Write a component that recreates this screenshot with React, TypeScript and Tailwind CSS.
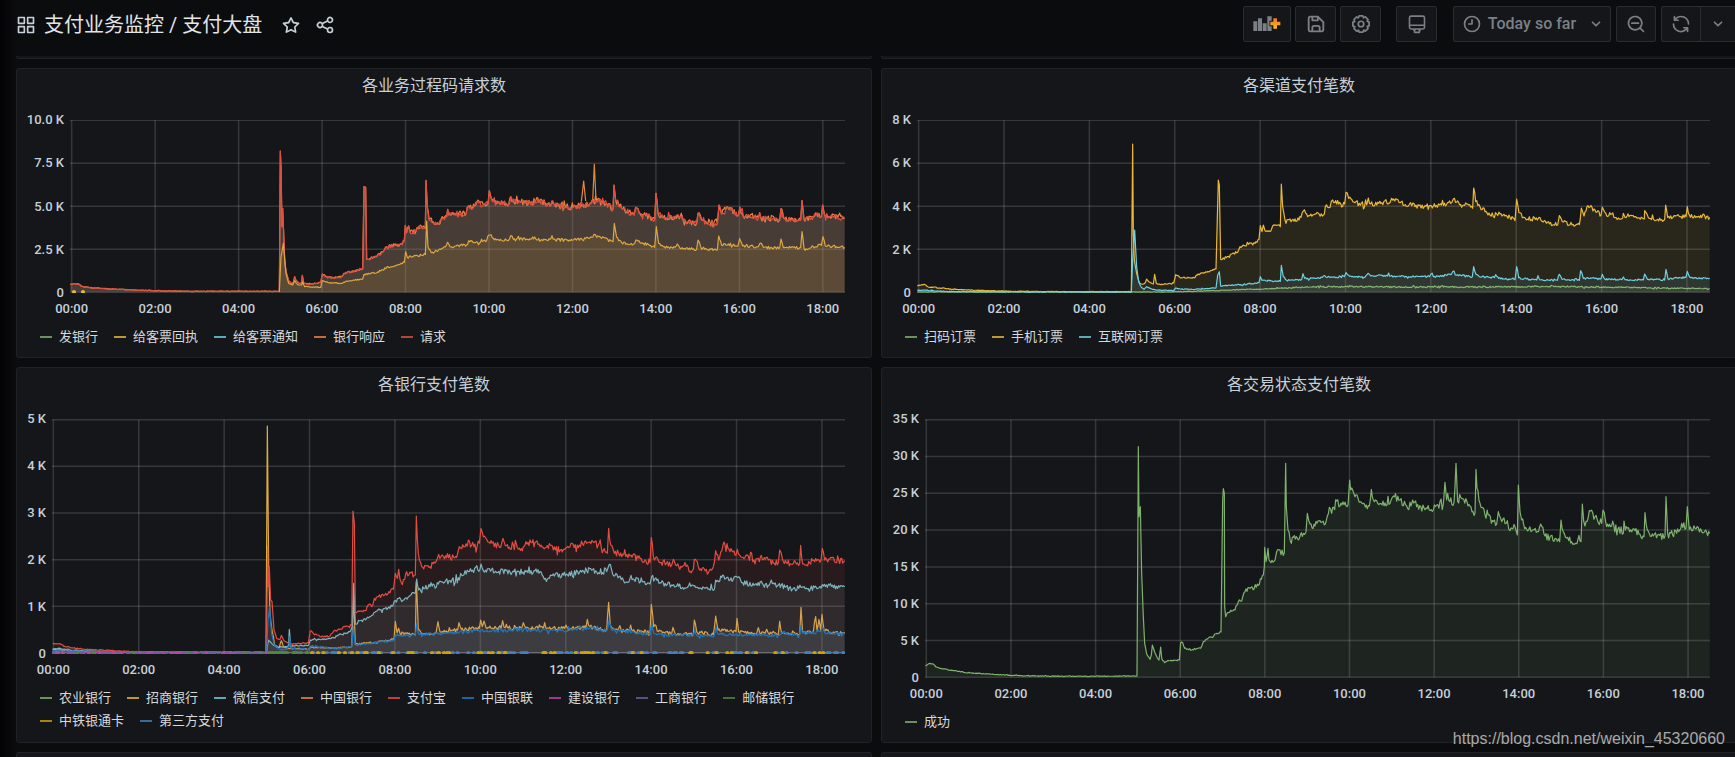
import React, { FunctionComponent, ReactNode } from 'react'

type Point = [number, number]

interface Series {
    color: string
    trace: string
    noise?: number
    fill?: string
    fillOpacity?: number
}

interface LegendEntry {
    name: string
    color: string
}

interface Box {
    x: number
    y: number
    width: number
    height: number
    className: string
}

interface PanelProps {
    title: string
    box: Box
    base: number
    top: number
    origin: number
    step: number
    axisWidth: string
    yLabels: string[]
    series: Series[]
    legend: LegendEntry[]
    children?: ReactNode
}

const HOURS = ['00:00', '02:00', '04:00', '06:00', '08:00', '10:00', '12:00', '14:00', '16:00', '18:00']

const GREEN = '#7eb26d'
const YELLOW = '#eab839'
const CYAN = '#6ed0e0'
const ORANGE = '#ef843c'
const RED = '#e24d42'
const BLUE = '#1f78c1'

// traces are "x,y" pairs, three units to a screen pixel
const REQUESTS = `211,553 225,551 235,551 245,559 270,563 300,565 330,567 400,570 460,572 560,574 838,574 841,153 843,200 846,380 848,325 851,400 854,480 858,515 866,543 874,550 880,548 884,530 890,543 898,550 905,548 907,526 911,550 925,553 962,548 967,522 980,530 1000,534 1025,530 1032,520 1060,514 1088,507 1092,260 1097,262 1100,478 1105,478 1130,470 1150,455 1160,440 1200,433 1213,420 1216,376 1220,398 1226,378 1230,396 1248,394 1254,382 1276,384 1278,241 1282,320 1288,360 1300,365 1310,372 1330,355 1340,350 1343,328 1346,345 1365,340 1398,342 1405,318 1415,328 1430,308 1450,314 1464,312 1468,272 1474,295 1495,305 1526,314 1532,290 1538,305 1590,308 1620,300 1650,318 1656,303 1665,317 1720,322 1770,310 1790,303 1820,312 1839,328 1842,255 1847,300 1865,325 1902,345 1907,322 1918,340 1950,350 1964,360 1968,280 1974,340 1990,352 2025,352 2032,345 2050,362 2090,370 2094,340 2105,360 2120,370 2152,372 2157,315 2165,342 2180,320 2215,345 2220,322 2230,350 2245,345 2275,355 2279,338 2283,355 2330,355 2339,360 2343,326 2352,355 2380,362 2402,360 2406,302 2412,358 2440,352 2450,340 2464,350 2468,315 2474,345 2534,356`

const RECEIPTS = `838,576 843,470 850,430 858,520 866,550 878,555 884,542 895,555 905,555 908,545 914,560 962,562 967,542 985,548 1025,550 1040,543 1088,537 1092,523 1130,518 1160,502 1200,493 1213,487 1217,455 1222,472 1276,464 1280,363 1284,440 1294,458 1310,453 1338,438 1343,427 1350,440 1400,435 1406,422 1420,428 1460,422 1467,405 1480,415 1525,422 1532,407 1540,418 1580,418 1598,411 1610,420 1650,418 1656,407 1666,420 1720,420 1775,412 1782,403 1790,412 1820,415 1839,425 1843,370 1850,412 1865,428 1900,433 1908,420 1930,430 1964,442 1969,380 1976,430 1990,440 2025,442 2032,432 2040,445 2090,448 2094,420 2102,440 2120,448 2152,450 2156,408 2165,436 2185,432 2214,438 2219,416 2228,438 2275,440 2280,430 2290,442 2339,444 2343,417 2350,443 2402,443 2406,395 2412,445 2464,436 2469,410 2476,438 2534,442`

const MOBILE = `142,556 155,554 165,554 175,561 210,564 260,568 330,571 430,574 600,575 784,575 788,132 790,400 793,480 800,520 808,548 818,553 826,548 830,537 838,546 850,552 854,523 859,550 872,554 911,549 917,524 930,533 975,533 985,522 1020,513 1038,507 1045,240 1048,255 1052,478 1060,474 1078,472 1088,460 1103,457 1110,440 1135,433 1155,430 1167,418 1171,377 1176,395 1180,375 1185,392 1203,392 1208,378 1231,380 1234,252 1238,320 1245,360 1272,364 1293,352 1300,333 1310,342 1360,345 1366,320 1380,322 1388,300 1400,312 1424,312 1428,277 1436,295 1455,308 1490,315 1495,294 1502,312 1560,308 1565,295 1590,308 1615,318 1622,308 1635,320 1690,318 1745,308 1750,297 1760,306 1790,312 1808,325 1811,264 1817,305 1830,320 1860,345 1880,342 1890,342 1920,352 1935,362 1940,297 1947,338 1960,352 2002,360 2007,352 2020,366 2063,375 2068,347 2080,366 2100,374 2128,374 2134,324 2142,348 2154,317 2175,330 2193,345 2197,322 2210,347 2225,342 2245,354 2258,354 2260,340 2265,352 2295,350 2323,357 2324,332 2335,353 2360,360 2384,358 2387,315 2393,352 2430,350 2448,350 2452,320 2458,345 2480,350 2519,352`

const INTERNET = `142,571 165,570 200,573 260,575 784,576 788,480 794,390 800,500 806,545 815,563 822,568 830,560 845,567 860,570 911,572 917,564 930,567 975,568 1038,564 1043,525 1048,515 1052,558 1090,556 1167,548 1171,530 1176,541 1231,544 1234,496 1240,530 1250,541 1295,538 1299,521 1304,535 1350,535 1364,527 1372,532 1423,530 1428,518 1436,526 1485,532 1494,520 1502,528 1552,528 1556,519 1562,528 1610,530 1678,530 1683,522 1690,530 1743,524 1748,515 1756,525 1807,530 1811,500 1818,523 1835,531 1873,533 1877,524 1886,535 1935,539 1940,500 1946,533 1970,537 2000,540 2004,527 2010,540 2062,541 2068,523 2076,538 2128,541 2132,512 2140,535 2193,536 2197,523 2204,537 2256,539 2260,531 2265,539 2320,540 2324,522 2332,538 2384,540 2388,508 2394,537 2430,533 2448,532 2452,514 2460,532 2490,536 2519,535`

const SCAN = '142,576 900,576 1000,573 1200,566 1320,561 1430,560 1700,561 2110,560 2300,563 2519,566'

const ALIPAY = `158,731 178,731 195,739 220,744 260,748 340,752 430,756 799,756 803,437 805,560 808,500 812,600 816,604 822,690 830,715 840,718 844,706 852,722 872,732 925,728 931,693 940,700 960,710 990,708 1000,695 1035,680 1055,678 1059,333 1063,370 1066,635 1098,632 1105,615 1118,617 1123,595 1160,585 1180,568 1186,520 1192,535 1196,508 1200,538 1214,538 1220,515 1246,525 1249,348 1255,460 1265,500 1290,500 1308,485 1316,463 1330,470 1370,472 1378,440 1395,440 1405,420 1415,435 1438,430 1443,385 1450,410 1470,430 1502,442 1509,415 1516,437 1570,440 1578,425 1608,425 1620,440 1645,445 1690,448 1710,440 1760,430 1782,428 1810,450 1822,460 1826,385 1832,435 1840,450 1865,470 1890,468 1920,475 1950,488 1954,413 1960,470 1980,488 2015,495 2020,478 2030,497 2080,508 2083,478 2095,500 2125,518 2140,500 2147,452 2156,480 2169,435 2190,455 2208,465 2212,448 2222,470 2245,468 2265,492 2275,475 2335,488 2339,450 2350,485 2380,490 2399,490 2402,436 2408,492 2450,482 2463,480 2467,445 2474,480 2534,482`

const WECHAT = `158,746 175,745 210,750 300,754 430,757 800,758 803,735 806,720 815,730 830,742 860,740 866,735 868,688 872,738 925,736 931,720 990,716 1050,695 1057,680 1061,550 1066,672 1100,655 1140,630 1170,625 1186,602 1215,595 1246,580 1250,537 1256,570 1290,560 1315,552 1350,542 1378,540 1382,520 1405,515 1440,508 1443,492 1450,512 1530,516 1620,515 1630,530 1690,525 1760,512 1820,515 1828,493 1838,522 1870,540 1887,545 1890,535 1930,545 1950,552 1955,530 1980,548 2030,558 2090,562 2143,568 2147,540 2156,545 2168,525 2190,540 2212,532 2225,548 2290,555 2335,555 2380,565 2403,562 2450,565 2470,558 2534,560`

const MERCHANTS = `158,748 210,753 430,757 798,758 802,78 806,500 810,640 816,690 824,735 838,742 844,722 850,740 866,745 925,748 932,742 1000,745 1055,740 1061,590 1066,733 1120,728 1182,718 1186,664 1191,698 1196,685 1200,700 1246,705 1249,545 1255,690 1265,700 1308,700 1314,665 1320,695 1373,690 1377,668 1384,688 1438,685 1442,660 1447,680 1452,663 1458,683 1503,685 1508,662 1516,683 1565,685 1570,668 1578,683 1630,685 1634,668 1640,685 1694,685 1698,675 1704,686 1758,682 1762,658 1770,680 1820,690 1826,607 1831,675 1850,687 1888,692 1892,675 1898,692 1950,700 1954,613 1961,680 1975,695 2015,700 2019,682 2025,700 2080,703 2083,660 2090,695 2140,704 2147,648 2154,690 2208,695 2211,655 2216,695 2270,700 2275,683 2280,700 2295,700 2300,688 2305,700 2335,703 2339,664 2345,700 2399,704 2403,622 2408,698 2440,695 2447,650 2451,690 2457,658 2462,690 2466,643 2472,690 2490,697 2534,697`

const UNIONPAY = `158,752 430,757 800,758 804,660 809,620 815,700 824,738 840,748 860,748 868,740 869,710 874,745 925,748 932,738 1000,745 1055,740 1060,680 1066,735 1182,720 1186,705 1215,708 1246,705 1250,670 1256,702 1320,702 1380,695 1443,692 1570,690 1690,692 1770,684 1820,692 1827,662 1835,688 1950,703 1955,670 1962,700 2010,705 2080,706 2084,690 2090,706 2142,708 2148,680 2154,702 2250,705 2335,706 2350,698 2398,705 2403,678 2408,700 2462,695 2466,682 2474,698 2534,700`

const SUCCESS = `166,797 180,790 190,792 198,801 215,806 250,812 300,819 370,823 420,826 500,828 650,829 801,828 805,140 807,350 811,320 815,520 820,650 824,730 830,762 840,778 844,765 847,735 852,750 858,765 867,780 872,741 875,775 884,788 900,782 928,780 932,728 938,728 944,745 965,750 992,745 1000,725 1008,718 1025,712 1040,700 1053,696 1058,300 1060,266 1063,280 1064,620 1067,650 1072,638 1095,630 1105,605 1115,603 1125,575 1140,565 1165,556 1180,525 1183,500 1184,442 1188,485 1194,445 1197,480 1215,480 1220,455 1243,458 1247,190 1249,320 1254,390 1264,430 1270,412 1285,420 1300,400 1308,395 1312,340 1320,372 1335,378 1350,362 1366,372 1378,322 1385,340 1400,303 1410,318 1434,315 1439,240 1442,270 1455,290 1480,310 1498,318 1504,268 1510,300 1530,310 1560,310 1570,288 1590,300 1610,318 1623,318 1628,300 1640,320 1690,330 1700,315 1720,312 1725,247 1730,300 1752,308 1758,190 1763,305 1775,295 1800,318 1815,340 1818,208 1821,265 1830,310 1845,345 1880,372 1885,335 1895,365 1912,362 1920,392 1935,380 1942,405 1945,255 1950,335 1955,360 1970,388 2002,395 2012,372 2025,408 2055,415 2069,425 2073,360 2080,395 2093,412 2105,425 2133,425 2137,312 2145,378 2158,332 2175,350 2195,370 2199,330 2210,380 2225,378 2250,400 2260,400 2262,363 2266,390 2295,392 2322,410 2325,338 2332,390 2350,408 2385,408 2388,290 2393,400 2420,400 2435,370 2448,385 2452,320 2458,388 2475,385 2495,395 2519,400`

const random = (seed: number) => () => {
    seed = (seed * 16807) % 2147483647
    return seed / 2147483647
}

// keeps the given points and fills the gaps between them with jitter that grows with the value
const densify = (trace: string, base: number, noise: number, seed: number): Point[] => {
    const rand = random(seed)
    const points = trace.trim().split(/\s+/).map((pair) => pair.split(',').map(Number) as Point)
    const out: Point[] = [points[0]]
    for (let i = 1; i < points.length; i++) {
        const [x0, y0] = points[i - 1]
        const [x1, y1] = points[i]
        const count = Math.floor((x1 - x0) / 3)
        for (let k = 1; k < count; k++) {
            const y = y0 + ((y1 - y0) * k) / count
            const amp = noise * (base - y) + 0.8
            const kick = rand() > 0.9 ? 2 : 1
            out.push([x0 + ((x1 - x0) * k) / count, y + (rand() * 2 - 1) * amp * kick])
        }
        out.push([x1, y1])
    }
    return out
}

const toPath = (points: Point[]) => 'M' + points.map(([x, y]) => `${x.toFixed(1)} ${y.toFixed(1)}`).join('L')

const Panel: FunctionComponent<PanelProps> = ({
    title,
    box,
    base,
    top,
    origin,
    step,
    axisWidth,
    yLabels,
    series,
    legend,
    children
}) => {
    const right = box.x + box.width
    return (
        <section className="flex flex-col rounded-[3px] border border-[#202226] bg-[#141619] pb-[9px]">
            <h2 className="pt-[5px] pr-5 text-center text-base leading-6 text-[#c7d0d9]">{title}</h2>
            <div className="mt-[22px] grid grid-cols-[auto_1fr] gap-x-1.5 gap-y-2 pr-[26px] text-[13px] font-medium leading-4">
                <ol className={`-my-2 flex flex-col justify-between text-right ${axisWidth}`}>
                    {yLabels.map((label) => <li key={label}>{label}</li>)}
                </ol>
                <svg
                    className={`block w-full ${box.className}`}
                    viewBox={`${box.x} ${box.y} ${box.width} ${box.height}`}
                    preserveAspectRatio="none"
                    role="img"
                    aria-label={title}
                >
                    <g stroke="#c8c8c8" strokeOpacity="0.19" strokeWidth="4.5">
                        {yLabels.map((label, i) => {
                            const y = top + ((base - top) * i) / (yLabels.length - 1)
                            return <path key={label} d={`M${box.x} ${y}H${right}`} />
                        })}
                        {HOURS.map((hour, i) => <path key={hour} d={`M${origin + step * i} ${top}V${base}`} />)}
                    </g>
                    {series.map(({ color, trace, noise = 0.02, fill = color, fillOpacity = 0.1 }, i) => {
                        const points = densify(trace, base, noise, 97 + i * 131)
                        const line = toPath(points)
                        const first = points[0][0]
                        const last = points[points.length - 1][0]
                        return (
                            <g key={i}>
                                <path d={`${line}L${last} ${base}L${first} ${base}Z`} fill={fill} fillOpacity={fillOpacity} />
                                <path d={line} fill="none" stroke={color} strokeWidth="1.2" strokeLinejoin="round" vectorEffect="non-scaling-stroke" />
                            </g>
                        )
                    })}
                    {children}
                </svg>
                <ol className="col-start-2 flex" style={{ paddingLeft: `${((origin - box.x) / box.width) * 100}%` }}>
                    {HOURS.map((hour) => (
                        <li key={hour} className="shrink-0 last:w-0" style={{ width: hour === '18:00' ? 0 : `${(step / (right - origin)) * 100}%` }}>
                            <span className="inline-block -translate-x-1/2">{hour}</span>
                        </li>
                    ))}
                </ol>
            </div>
            <ul className="mt-2 flex flex-wrap gap-x-4 pl-[23px] text-[13px] leading-[23px] text-[#d8d9da]">
                {legend.map(({ name, color }) => (
                    <li key={name} className="flex items-center gap-[7px]">
                        <span className="h-0.5 w-3 opacity-80" style={{ backgroundColor: color }} />
                        {name}
                    </li>
                ))}
            </ul>
        </section>
    )
}

// isolated samples sit on the zero line as dots
const Dots: FunctionComponent<{ color: string, xs: number[], y: number }> = ({ color, xs, y }) => (
    <path
        d={xs.map((x) => `M${x} ${y}h0.01`).join('')}
        stroke={color}
        strokeWidth="4"
        strokeLinecap="round"
        vectorEffect="non-scaling-stroke"
    />
)

const scatter = (from: number, to: number, count: number, seed: number) => {
    const rand = random(seed)
    return Array.from({ length: count }, () => Math.round(from + rand() * (to - from)))
}

const Icon: FunctionComponent<{ d: string, className?: string }> = ({ d, className = 'size-5' }) => (
    <svg className={className} viewBox="0 0 24 24" fill="currentColor" aria-hidden="true">
        <path d={d} />
    </svg>
)

const ICONS = {
    apps: 'M10,13H3a1,1,0,0,0-1,1v7a1,1,0,0,0,1,1h7a1,1,0,0,0,1-1V14A1,1,0,0,0,10,13ZM9,20H4V15H9ZM21,2H14a1,1,0,0,0-1,1v7a1,1,0,0,0,1,1h7a1,1,0,0,0,1-1V3A1,1,0,0,0,21,2ZM20,9H15V4h5Zm1,4H14a1,1,0,0,0-1,1v7a1,1,0,0,0,1,1h7a1,1,0,0,0,1-1V14A1,1,0,0,0,21,13Zm-1,7H15V15h5ZM10,2H3A1,1,0,0,0,2,3v7a1,1,0,0,0,1,1h7a1,1,0,0,0,1-1V3A1,1,0,0,0,10,2ZM9,9H4V4H9Z',
    star: 'M22,9.67A1,1,0,0,0,21.14,9l-5.69-.83L12.9,3a1,1,0,0,0-1.8,0L8.55,8.16,2.86,9a1,1,0,0,0-.81.68,1,1,0,0,0,.25,1l4.13,4-1,5.68A1,1,0,0,0,6.9,21.44L12,18.77l5.1,2.67a.93.93,0,0,0,.46.12,1,1,0,0,0,.59-.19,1,1,0,0,0,.4-1l-1-5.68,4.13-4A1,1,0,0,0,22,9.67Zm-6.15,4a1,1,0,0,0-.29.88l.72,4.2-3.76-2a1.06,1.06,0,0,0-.94,0l-3.76,2,.72-4.2a1,1,0,0,0-.29-.88l-3-3,4.21-.61a1,1,0,0,0,.76-.55L12,5.7l1.88,3.82a1,1,0,0,0,.76.55l4.21.61Z',
    share: 'M18,14a4,4,0,0,0-3.08,1.48l-5.1-2.35a3.64,3.64,0,0,0,0-2.26l5.1-2.35A4,4,0,1,0,14,6a4.17,4.17,0,0,0,.07.71L8.79,9.14a4,4,0,1,0,0,5.72l5.28,2.43A4.17,4.17,0,0,0,14,18a4,4,0,1,0,4-4ZM18,4a2,2,0,1,1-2,2A2,2,0,0,1,18,4ZM6,14a2,2,0,1,1,2-2A2,2,0,0,1,6,14Zm12,6a2,2,0,1,1,2-2A2,2,0,0,1,18,20Z',
    save: 'M20.71,9.29l-6-6a1,1,0,0,0-.32-.21A1.09,1.09,0,0,0,14,3H6A3,3,0,0,0,3,6V18a3,3,0,0,0,3,3H18a3,3,0,0,0,3-3V10A1,1,0,0,0,20.71,9.29ZM9,5h4V7H9Zm6,14H9V16a1,1,0,0,1,1-1h4a1,1,0,0,1,1,1Zm4-1a1,1,0,0,1-1,1H17V16a3,3,0,0,0-3-3H10a3,3,0,0,0-3,3v3H6a1,1,0,0,1-1-1V6A1,1,0,0,1,6,5H7V8A1,1,0,0,0,8,9h6a1,1,0,0,0,1-1V6.41l4,4Z',
    sync: 'M19.91,15.51H15.38a1,1,0,0,0,0,2h2.4A8,8,0,0,1,4,12a1,1,0,1,0-2,0,10,10,0,0,0,16.88,7.23V21a1,1,0,0,0,2,0V16.5A1,1,0,0,0,19.91,15.51ZM12,2A10,10,0,0,0,5.12,4.77V3a1,1,0,0,0-2,0V7.5a1,1,0,0,0,1,1h4.5a1,1,0,0,0,0-2H6.22A8,8,0,0,1,20,12a1,1,0,0,0,2,0A10,10,0,0,0,12,2Z',
    clock: 'M12,2A10,10,0,1,0,22,12,10,10,0,0,0,12,2Zm0,18a8,8,0,1,1,8-8A8,8,0,0,1,12,20ZM12,6a1,1,0,0,0-1,1v4H8a1,1,0,0,0,0,2h4a1,1,0,0,0,1-1V7A1,1,0,0,0,12,6Z',
    angleDown: 'M17,9.17a1,1,0,0,0-1.41,0L12,12.71,8.46,9.17a1,1,0,0,0-1.41,0,1,1,0,0,0,0,1.42l4.24,4.24a1,1,0,0,0,1.42,0L17,10.59A1,1,0,0,0,17,9.17Z',
    zoomOut: 'M21.71,20.29,18,16.61A9,9,0,1,0,16.61,18l3.68,3.68a1,1,0,0,0,1.42,0A1,1,0,0,0,21.71,20.29ZM11,18a7,7,0,1,1,7-7A7,7,0,0,1,11,18Zm4-8H7a1,1,0,0,0,0,2h8a1,1,0,0,0,0-2Z'
}

const gear = 'M' + Array.from({ length: 8 }, (_, i) => [[-24, 7.3], [-13, 9.1], [13, 9.1], [21, 7.3]].map(([deg, r]) => {
    const a = ((i * 45 + deg) * Math.PI) / 180
    return `${(12 + r * Math.cos(a)).toFixed(2)} ${(12 + r * Math.sin(a)).toFixed(2)}`
}).join('L')).join('L') + 'Z'

const ToolButton: FunctionComponent<{ label: string, className: string, children: ReactNode }> = ({ label, className, children }) => (
    <button
        type="button"
        aria-label={label}
        className={`flex h-9 shrink-0 items-center justify-center border border-[#2a2c2f] bg-[#141619] text-[#7b8087] ${className}`}
    >
        {children}
    </button>
)

const Header: FunctionComponent = () => (
    <header className="-mr-px mb-2 flex h-12 items-center justify-between">
        <div className="flex items-center pt-0.5 text-[#c7d0d9]">
            <Icon d={ICONS.apps} />
            <h1 className="ml-2 text-xl leading-7 text-[#e3e4e6]">
                <a href="#folder">支付业务监控</a> / <a href="#dashboard">支付大盘</a>
            </h1>
            <button type="button" aria-label="收藏" className="ml-[19px]"><Icon d={ICONS.star} /></button>
            <button type="button" aria-label="分享" className="ml-3.5"><Icon d={ICONS.share} /></button>
        </div>
        <div className="flex items-center">
            <ToolButton label="Add panel" className="w-12 rounded-xs">
                <svg className="h-4 w-7" viewBox="56 51 84 48" aria-hidden="true">
                    <defs>
                        <linearGradient id="plus" x1="0" y1="0" x2="0" y2="1">
                            <stop offset="0" stopColor="#f0702a" />
                            <stop offset="1" stopColor="#fbc01a" />
                        </linearGradient>
                    </defs>
                    <path fill="currentColor" d="M57 67h12v29H57zM71 58h12v38H71zM85 73h12v23H85zM99 52h13v44H99z" />
                    <path fill="url(#plus)" stroke="#141619" strokeWidth="5" paintOrder="stroke" d="M117 58h11v10h10v11h-10v10h-11V79h-9V68h9z" />
                </svg>
            </ToolButton>
            <ToolButton label="Save dashboard" className="ml-1 w-[41px] rounded-xs">
                <Icon d={ICONS.save} className="size-[22px]" />
            </ToolButton>
            <ToolButton label="Dashboard settings" className="ml-1 w-[41px] rounded-xs">
                <svg className="size-[22px]" viewBox="0 0 24 24" fill="none" stroke="currentColor" strokeWidth="1.9" strokeLinejoin="round" aria-hidden="true">
                    <path d={gear} />
                    <circle cx="12" cy="12" r="3" />
                </svg>
            </ToolButton>
            <ToolButton label="Cycle view mode" className="ml-[15px] w-[41px] rounded-xs">
                <svg className="size-5" viewBox="0 0 24 24" fill="none" stroke="currentColor" strokeWidth="1.9" strokeLinejoin="round" aria-hidden="true">
                    <rect x="3" y="2.5" width="18" height="15.5" rx="2" />
                    <path d="M3 13.5h18M9.5 18v1.5h-2M14.5 18v1.5h2M9 19v3h6v-3" />
                </svg>
            </ToolButton>
            <ToolButton label="Time range" className="ml-4 w-[158px] rounded-xs pl-1">
                <Icon d={ICONS.clock} />
                <span className="ml-1.5 mr-2.5 text-base font-medium">Today so far</span>
                <Icon d={ICONS.angleDown} />
            </ToolButton>
            <ToolButton label="Zoom out" className="ml-[5px] w-10 rounded-xs">
                <Icon d={ICONS.zoomOut} />
            </ToolButton>
            <ToolButton label="Refresh" className="ml-[5px] w-10 rounded-l-xs">
                <Icon d={ICONS.sync} />
            </ToolButton>
            <ToolButton label="Refresh interval" className="-ml-px w-9 rounded-r-xs">
                <Icon d={ICONS.angleDown} />
            </ToolButton>
        </div>
    </header>
)

export default function App() {
    return (
        <div className="relative flex min-h-screen flex-col overflow-hidden bg-[linear-gradient(to_right,#030304,#0b0c0e_16px)] pl-4 font-[Roboto,'Noto_Sans_CJK_SC',sans-serif] text-[#c7d0d9]">
            <Header />
            <main className="-mr-0.5 grid flex-1 grid-cols-2 grid-rows-[auto_auto_auto_1fr] gap-[9px]">
                <div className="h-[3px] rounded-b-[3px] border border-t-0 border-[#202226] bg-[#141619]" />
                <div className="h-[3px] rounded-b-[3px] border border-t-0 border-[#202226] bg-[#141619]" />
                <Panel
                    title="各业务过程码请求数"
                    box={{ x: 210, y: 60, width: 2325, height: 519, className: 'h-[173px]' }}
                    base={577}
                    top={61}
                    origin={215}
                    step={250.4}
                    axisWidth="w-[47px]"
                    yLabels={['10.0 K', '7.5 K', '5.0 K', '2.5 K', '0']}
                    series={[
                        { color: ORANGE, trace: REQUESTS, noise: 0.035, fillOpacity: 0 },
                        { color: '#e08a3c', trace: '1744,305 1751,243 1757,303', noise: 0, fillOpacity: 0 },
                        { color: '#e08a3c', trace: '1778,303 1783,193 1788,300', noise: 0, fillOpacity: 0 },
                        { color: RED, trace: REQUESTS, noise: 0.03, fill: '#aa836e', fillOpacity: 0.35 },
                        { color: '#dca642', trace: RECEIPTS, noise: 0.025, fill: YELLOW, fillOpacity: 0.12 }
                    ]}
                    legend={[
                        { name: '发银行', color: GREEN },
                        { name: '给客票回执', color: YELLOW },
                        { name: '给客票通知', color: CYAN },
                        { name: '银行响应', color: ORANGE },
                        { name: '请求', color: RED }
                    ]}
                >
                    <Dots color={YELLOW} xs={[222, 249]} y={576} />
                </Panel>
                <Panel
                    title="各渠道支付笔数"
                    box={{ x: 141, y: 60, width: 2379, height: 519, className: 'h-[173px]' }}
                    base={577}
                    top={61}
                    origin={146}
                    step={256.1}
                    axisWidth="w-[29px]"
                    yLabels={['8 K', '6 K', '4 K', '2 K', '0']}
                    series={[
                        { color: GREEN, trace: SCAN, noise: 0.08 },
                        { color: YELLOW, trace: MOBILE, noise: 0.025 },
                        { color: CYAN, trace: INTERNET, noise: 0.05 }
                    ]}
                    legend={[
                        { name: '扫码订票', color: GREEN },
                        { name: '手机订票', color: YELLOW },
                        { name: '互联网订票', color: CYAN }
                    ]}
                />
                <Panel
                    title="各银行支付笔数"
                    box={{ x: 156, y: 57, width: 2379, height: 705, className: 'h-[235px]' }}
                    base={759}
                    top={59}
                    origin={160}
                    step={256.2}
                    axisWidth="w-[29px]"
                    yLabels={['5 K', '4 K', '3 K', '2 K', '1 K', '0']}
                    series={[
                        { color: '#e0ad45', trace: MERCHANTS, noise: 0.07 },
                        { color: '#73bfcc', trace: WECHAT, noise: 0.035 },
                        { color: RED, trace: ALIPAY, noise: 0.035 },
                        { color: BLUE, trace: UNIONPAY, noise: 0.07 }
                    ]}
                    legend={[
                        { name: '农业银行', color: GREEN },
                        { name: '招商银行', color: YELLOW },
                        { name: '微信支付', color: CYAN },
                        { name: '中国银行', color: ORANGE },
                        { name: '支付宝', color: RED },
                        { name: '中国银联', color: BLUE },
                        { name: '建设银行', color: '#ba43a9' },
                        { name: '工商银行', color: '#705da0' },
                        { name: '邮储银行', color: '#508642' },
                        { name: '中铁银通卡', color: '#cca300' },
                        { name: '第三方支付', color: '#447ebc' }
                    ]}
                >
                    <path d="M158 758H2534" stroke="#76707c" strokeWidth="1" vectorEffect="non-scaling-stroke" />
                    <Dots color="#ba43a9" xs={scatter(160, 800, 60, 11)} y={759} />
                    <Dots color="#705da0" xs={scatter(160, 900, 38, 71)} y={759} />
                    <Dots color="#508642" xs={[232, 280, 400, 565, 735, ...scatter(808, 930, 26, 5)]} y={759} />
                    <Dots color="#447ebc" xs={scatter(940, 2530, 130, 23)} y={759} />
                    <Dots color="#cca300" xs={scatter(935, 2480, 55, 42)} y={759} />
                </Panel>
                <Panel
                    title="各交易状态支付笔数"
                    box={{ x: 165, y: 57, width: 2355, height: 777, className: 'h-[259px]' }}
                    base={832}
                    top={59}
                    origin={169}
                    step={253.9}
                    axisWidth="w-[37px]"
                    yLabels={['35 K', '30 K', '25 K', '20 K', '15 K', '10 K', '5 K', '0']}
                    series={[{ color: GREEN, trace: SUCCESS, noise: 0.022 }]}
                    legend={[{ name: '成功', color: GREEN }]}
                />
                <div className="rounded-t-[3px] border border-b-0 border-[#202226] bg-[#141619]" />
                <div className="rounded-t-[3px] border border-b-0 border-[#202226] bg-[#141619]" />
            </main>
            <p className="absolute right-2.5 bottom-1.5 font-['Liberation_Sans',Arial,sans-serif] text-base leading-6 text-[#a9a9aa]">
                https://blog.csdn.net/weixin_45320660
            </p>
        </div>
    )
}
